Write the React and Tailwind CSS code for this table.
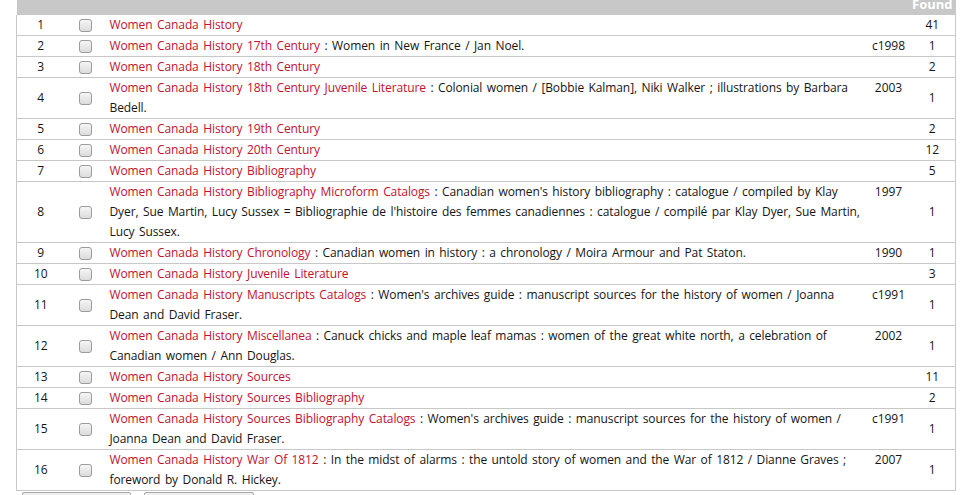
import React from "react";

const rows = [
  { n: 1, title: "Women Canada History", found: "41" },
  { n: 2, title: "Women Canada History 17th Century", rest: ": Women in New France / Jan Noel.", year: "c1998", found: "1" },
  { n: 3, title: "Women Canada History 18th Century", found: "2" },
  {
    n: 4,
    title: "Women Canada History 18th Century Juvenile Literature",
    rest: ": Colonial women / [Bobbie Kalman], Niki Walker ; illustrations by Barbara Bedell.",
    year: "2003",
    found: "1",
  },
  { n: 5, title: "Women Canada History 19th Century", found: "2" },
  { n: 6, title: "Women Canada History 20th Century", found: "12" },
  { n: 7, title: "Women Canada History Bibliography", found: "5" },
  {
    n: 8,
    title: "Women Canada History Bibliography Microform Catalogs",
    rest: ": Canadian women's history bibliography : catalogue / compiled by Klay Dyer, Sue Martin, Lucy Sussex = Bibliographie de l'histoire des femmes canadiennes : catalogue / compilé par Klay Dyer, Sue Martin, Lucy Sussex.",
    year: "1997",
    found: "1",
  },
  {
    n: 9,
    title: "Women Canada History Chronology",
    rest: ": Canadian women in history : a chronology / Moira Armour and Pat Staton.",
    year: "1990",
    found: "1",
  },
  { n: 10, title: "Women Canada History Juvenile Literature", found: "3" },
  {
    n: 11,
    title: "Women Canada History Manuscripts Catalogs",
    rest: ": Women's archives guide : manuscript sources for the history of women / Joanna Dean and David Fraser.",
    year: "c1991",
    found: "1",
  },
  {
    n: 12,
    title: "Women Canada History Miscellanea",
    rest: ": Canuck chicks and maple leaf mamas : women of the great white north, a celebration of Canadian women / Ann Douglas.",
    year: "2002",
    found: "1",
  },
  { n: 13, title: "Women Canada History Sources", found: "11" },
  { n: 14, title: "Women Canada History Sources Bibliography", found: "2" },
  {
    n: 15,
    title: "Women Canada History Sources Bibliography Catalogs",
    rest: ": Women's archives guide : manuscript sources for the history of women / Joanna Dean and David Fraser.",
    year: "c1991",
    found: "1",
  },
  {
    n: 16,
    title: "Women Canada History War Of 1812",
    rest: ": In the midst of alarms : the untold story of women and the War of 1812 / Dianne Graves ; foreword by Donald R. Hickey.",
    year: "2007",
    found: "1",
  },
];

export default function App() {
  return (
    <div className="w-[967px] h-[495px] overflow-hidden bg-white text-[12px] leading-[20px] text-[#151515] font-['Open_Sans',sans-serif]">
      <table className="ml-4 w-[940px] border-collapse table-fixed">
        <colgroup>
          <col className="w-[48px]" />
          <col className="w-[41px]" />
          <col />
          <col className="w-[42px]" />
          <col className="w-[46px]" />
        </colgroup>
        <thead>
          <tr className="bg-[#c8c8c8]">
            <th colSpan={4} className="p-0">
              <div className="h-[15px]" />
            </th>
            <th className="p-0 border-r border-[#c8c8c8]">
              <div className="h-[15px] overflow-hidden">
                <div className="-mt-[6px] text-white font-bold text-[13px] text-center">Found</div>
              </div>
            </th>
          </tr>
        </thead>
        <tbody>
          {rows.map((r) => (
            <tr key={r.n} className="border-b border-[#c8c8c8]">
              <td className="p-0 text-center align-middle border-l border-[#c8c8c8]">{r.n}</td>
              <td className="p-0 align-middle">
                <div className="flex justify-center">
                  <input
                    type="checkbox"
                    className="appearance-none w-[13px] h-[13px] rounded-[3px] border border-[#9c9c9c] bg-gradient-to-b from-[#f5f5f5] to-[#dcdcdc] block"
                  />
                </div>
              </td>
              <td className="p-0 pl-1 pr-1 align-top [word-spacing:1.5px] tracking-[-0.1px]">
                <span className="text-[#c4102f]">{r.title}</span>
                {r.rest && <span> {r.rest}</span>}
              </td>
              <td className="p-0 text-center align-top">{r.year}</td>
              <td className="p-0 text-center align-middle border-r border-[#c8c8c8]">{r.found}</td>
            </tr>
          ))}
        </tbody>
      </table>
      <div className="flex gap-[13px] ml-[22px] mt-[1px]">
        <button className="w-[109px] h-[22px] border border-[#a8a8a8] rounded-[2px] bg-[#efefef] text-[12px]">Add Marked to Bookbag</button>
        <button className="w-[110px] h-[22px] border border-[#a8a8a8] rounded-[2px] bg-[#efefef] text-[12px]">Add All On Page</button>
      </div>
    </div>
  );
}
